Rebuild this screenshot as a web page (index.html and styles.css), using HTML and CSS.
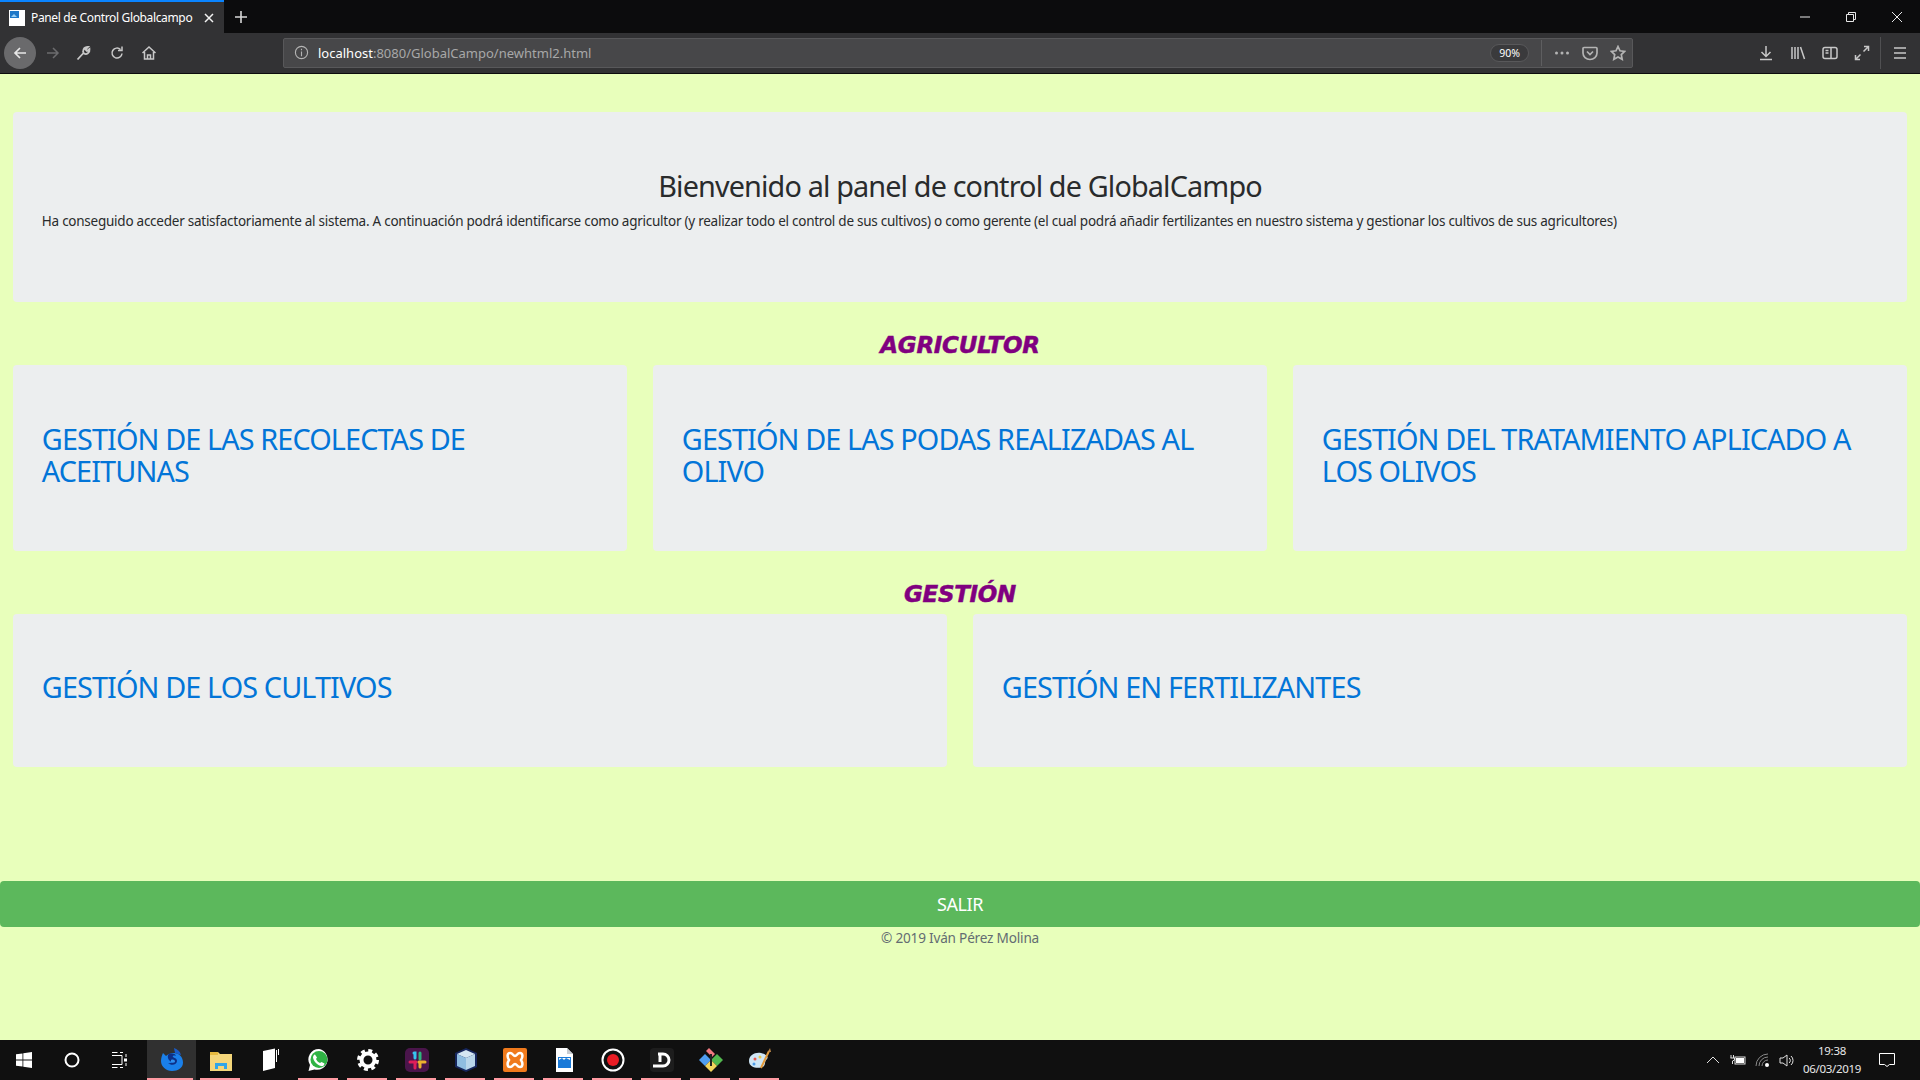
FILE: index.html
```html
<!DOCTYPE html>
<html lang="es">
<head>
  <meta charset="UTF-8">
  <title>Panel de Control Globalcampo</title>
  <link rel="stylesheet" href="styles.css">
</head>
<body>
  <div class="tabbar">
    <div class="tab">
      <svg class="favicon" viewBox="0 0 16 16"><rect width="16" height="16" fill="#fff"/><rect x="1" y="1" width="9" height="7" fill="#1f78c8"/><path d="M2 7l3-3 3 3z" fill="#9ad0f5"/></svg>
      <span class="tab-title">Panel de Control Globalcampo</span>
      <svg class="tab-close" viewBox="0 0 12 12"><path d="M2 2l8 8M10 2l-8 8"/></svg>
    </div>
    <svg class="new-tab" viewBox="0 0 14 14"><path d="M7 1v12M1 7h12"/></svg>
    <div class="window-btns">
      <svg viewBox="0 0 12 12"><path d="M1 6h10"/></svg>
      <svg viewBox="0 0 12 12"><path d="M1.500 3.500h7v7h-7zM3.500 3.500v-2h7v7h-2"/></svg>
      <svg viewBox="0 0 12 12"><path d="M1 1l10 10M11 1L1 11"/></svg>
    </div>
  </div>

  <div class="toolbar">
    <div class="back-btn">
      <svg viewBox="0 0 16 16"><path d="M14 8H3M8 3L3 8l5 5"/></svg>
    </div>
    <svg class="tool dim" viewBox="0 0 16 16"><path d="M2 8h11M8 3l5 5-5 5"/></svg>
    <svg class="tool wrench" viewBox="0 0 16 16"><path d="M2.500 14.500L8.500 8M9 8.500C7 6 8.500 2 13 2l-2.500 2.500 1.500 1.500L14.500 4c.5 4-3 6-5.500 4.500z" stroke-width="1.800"/></svg>
    <svg class="tool" viewBox="0 0 16 16"><path d="M13 8.500A5 5 0 1 1 11.500 4.500M13 1.500v4h-4"/></svg>
    <svg class="tool" viewBox="0 0 16 16"><path d="M1.500 8L8 2l6.500 6M3.500 7v7h9V7M6.500 14v-4h3v4"/></svg>

    <div class="urlbar">
      <svg class="info" viewBox="0 0 16 16"><circle cx="8" cy="8" r="6.500"/><path d="M8 7v5M8 4v1.500"/></svg>
      <span class="url"><b>localhost</b>:8080/GlobalCampo/newhtml2.html</span>
      <span class="zoom-pill">90%</span>
      <span class="url-sep"></span>
      <svg class="url-icon" viewBox="0 0 16 16"><circle cx="2.500" cy="8" r="1.500" class="solid"/><circle cx="8" cy="8" r="1.500" class="solid"/><circle cx="13.500" cy="8" r="1.500" class="solid"/></svg>
      <svg class="url-icon" viewBox="0 0 16 16"><path d="M2 2.500h12a1 1 0 0 1 1 1V8a7 6.500 0 0 1-14 0V3.500a1 1 0 0 1 1-1zM5 6.500l3 3 3-3" stroke-width="1.700"/></svg>
      <svg class="url-icon" viewBox="0 0 16 16"><path d="M8 1.500l2 4.300 4.700.6-3.400 3.200.9 4.700L8 12l-4.200 2.300.9-4.700L1.300 6.400 6 5.800z" stroke-width="1.700"/></svg>
    </div>

    <div class="right-tools">
      <svg class="tool" viewBox="0 0 16 16"><path d="M8 1v10M3.500 7L8 11.500 12.500 7M2 14.500h12"/></svg>
      <svg class="tool" viewBox="0 0 16 16"><path d="M2 2v12M5 2v12M8 2v12M10.500 2l4 12"/></svg>
      <svg class="tool" viewBox="0 0 16 16"><rect x="1" y="2.500" width="14" height="11" rx="2"/><path d="M9 2.500v11M3.500 5.500h3M3.500 8h3"/></svg>
      <svg class="tool" viewBox="0 0 16 16"><path d="M9.500 6.500L14.500 1.500M10 1.500h4.500V6M6.500 9.500l-5 5M1.500 10v4.500H6"/></svg>
      <span class="tool-sep"></span>
      <svg class="tool" viewBox="0 0 16 16"><path d="M2 3h12M2 8h12M2 13h12" stroke-width="1.700"/></svg>
    </div>
  </div>

  <main class="page">
    <section class="jumbotron">
      <h1 class="page-title">Bienvenido al panel de control de GlobalCampo</h1>
      <p>Ha conseguido acceder satisfactoriamente al sistema. A continuación podrá identificarse como agricultor (y realizar todo el control de sus cultivos) o como gerente (el cual podrá añadir fertilizantes en nuestro sistema y gestionar los cultivos de sus agricultores)</p>
    </section>

    <h3 class="section-title">AGRICULTOR</h3>
    <div class="cards three">
      <div class="jumbotron"><h2><a href="#">GESTIÓN DE LAS RECOLECTAS DE ACEITUNAS</a></h2></div>
      <div class="jumbotron"><h2><a href="#">GESTIÓN DE LAS PODAS REALIZADAS AL OLIVO</a></h2></div>
      <div class="jumbotron"><h2><a href="#">GESTIÓN DEL TRATAMIENTO APLICADO A LOS OLIVOS</a></h2></div>
    </div>

    <h3 class="section-title">GESTIÓN</h3>
    <div class="cards two">
      <div class="jumbotron"><h2><a href="#">GESTIÓN DE LOS CULTIVOS</a></h2></div>
      <div class="jumbotron"><h2><a href="#">GESTIÓN EN FERTILIZANTES</a></h2></div>
    </div>

    <a class="btn-salir" href="#">SALIR</a>
    <p class="copy">© 2019 Iván Pérez Molina</p>
  </main>

  <div class="taskbar">
    <div class="sys-btn">
      <svg viewBox="0 0 16 16"><path class="white" d="M0 2.300l6.500-.9v6.200H0zM7.300 1.300L16 0v7.600H7.300zM0 8.400h6.500v6.200L0 13.700zM7.300 8.400H16V16l-8.700-1.200z"/></svg>
    </div>
    <div class="sys-btn">
      <svg viewBox="0 0 16 16"><circle cx="8" cy="8" r="6.500" fill="none" stroke="#fff" stroke-width="2"/></svg>
    </div>
    <div class="sys-btn">
      <svg viewBox="0 0 16 16"><path fill="none" stroke="#fff" d="M0 .5h5.500M0 15.500h5.500M0 3.500h10v9H0M8 .5h3M8 15.500h3M14 2v3M14 11v3"/><rect class="white" x="12" y="6.500" width="3" height="3"/></svg>
    </div>

    <div class="app first active on">
      <svg viewBox="0 0 24 24"><path d="M3 5l3 3c2-2 5-3 8-3 5 0 9 4 9 9.500S18 23 12 23 1 18.500 1 13c0-3 1-6 2-8z" fill="#1a80ea"/><path d="M14 0c3 1 6 3 7 7l-6-2z" fill="#1a5cc8"/><path d="M8 7c2-2 7-2 8 1-2-1-4 0-3 1 1 1 4 1 4 4 0 4-6 5-9 2 2 .5 4 0 5-1-3 0-6-3-5-7z" fill="#0d2f86"/><path d="M11 12c2-1 4 0 4 1.500S12 15 11 14z" fill="#2f90f0"/></svg>
    </div>
    <div class="app on">
      <svg viewBox="0 0 24 24"><path d="M1 4h8l2 2h12v17H1z" fill="#f4d67a"/><path d="M1 4h8v3H1z" fill="#e6b93f"/><path d="M6 21v-6h12v6h-3v-3H9v3z" fill="#2fa5e8"/></svg>
    </div>
    <div class="app">
      <svg viewBox="0 0 24 24"><path d="M5 3l12-2.500V20L5 23z" fill="#fff"/><path d="M18.500 2v12M20.500 1v6" stroke="#fff" fill="none"/></svg>
    </div>
    <div class="app on">
      <svg viewBox="0 0 24 24"><path d="M12 1a10.500 10.500 0 0 0-9 16L1.500 23l6-1.500A10.500 10.500 0 1 0 12 1z" fill="#fff"/><circle cx="12" cy="11.500" r="8.500" fill="#2fb344"/><path d="M8 6.500l2 3-1 1.500c1 2 2 3 4 4l1.500-1 3 1.500c0 2-2 3-3.500 2.500C10 17 6.500 13 6 9.500 6 8 7 6.500 8 6.500z" fill="#fff"/></svg>
    </div>
    <div class="app on">
      <svg viewBox="0 0 24 24"><circle cx="12" cy="12" r="6.500" fill="none" stroke="#fff" stroke-width="4"/><circle cx="12" cy="12" r="9.500" fill="none" stroke="#fff" stroke-width="3" stroke-dasharray="4 3.460"/></svg>
    </div>
    <div class="app on">
      <svg viewBox="0 0 24 24"><rect width="24" height="24" rx="5" fill="#4a154b"/><path d="M9 5h1v5" stroke="#36c5f0" stroke-width="3" stroke-linecap="round" fill="none"/><path d="M5 14h6" stroke="#e01e5a" stroke-width="3" stroke-linecap="round"/><path d="M15 5v6" stroke="#2eb67d" stroke-width="3" stroke-linecap="round"/><path d="M14 14h6" stroke="#ecb22e" stroke-width="3" stroke-linecap="round"/><path d="M10 14v6" stroke="#e01e5a" stroke-width="3" stroke-linecap="round"/><path d="M15 15v4" stroke="#ecb22e" stroke-width="3" stroke-linecap="round"/></svg>
    </div>
    <div class="app on">
      <svg viewBox="0 0 24 24"><path d="M12 0l11 5v14l-11 5-11-5V5z" fill="#16265c"/><path d="M12 2l9 4-9 4-9-4z" fill="#d5e6f2"/><path d="M3 6l9 4v12l-9-4z" fill="#8fbde0"/><path d="M21 6l-9 4v12l9-4z" fill="#b9d6ea"/></svg>
    </div>
    <div class="app on">
      <svg viewBox="0 0 24 24"><rect width="24" height="24" rx="2" fill="#f07a1c"/><path d="M7 5c3 0 3 3 5 3s2-3 5-3 3 4 1 7c2 3 2 7-1 7s-3-3-5-3-2 3-5 3-3-4-1-7c-2-3-2-7 1-7z" fill="none" stroke="#fff" stroke-width="2.500"/></svg>
    </div>
    <div class="app on">
      <svg viewBox="0 0 24 24"><path d="M4 0h11l6 6v18H4z" fill="#fff"/><path d="M15 0l6 6h-6z" fill="#c8ccd2"/><path d="M6 9h13v11H6z" fill="#1a7ad8"/><path d="M7 12l3-2 2 2 2-2 4 2v-2H7z" fill="#fff"/></svg>
    </div>
    <div class="app on">
      <svg viewBox="0 0 24 24"><circle cx="12" cy="12" r="10.500" fill="#111" stroke="#fff" stroke-width="2"/><circle cx="12" cy="12" r="6" fill="#ea1c24"/></svg>
    </div>
    <div class="app on">
      <svg viewBox="0 0 24 24"><rect width="24" height="24" rx="4" fill="#1d1d1d"/><path d="M8 6h5a6 6 0 0 1 0 12H3" fill="none" stroke="#fff" stroke-width="3"/><path d="M10 6v8" stroke="#fff" stroke-width="3"/></svg>
    </div>
    <div class="app on">
      <svg viewBox="0 0 24 24"><path d="M6 6l6 6-6 6-6-6z" fill="#4f9df0"/><path d="M18 6l6 6-6 6-6-6z" fill="#52b84f"/><path d="M12 12l6 6-6 6-6-6z" fill="#f2d45c"/><path d="M10 0l6 6-3 3-6-6z" fill="#f07a80"/><path d="M12 6v12" stroke="#222" stroke-width="2"/></svg>
    </div>
    <div class="app on">
      <svg viewBox="0 0 24 24"><path d="M1 13c0-6 6-9 12-8 5 1 8 4 6 6-3 3-1 4-3 7-3 3-15 3-15-5z" fill="#cfe6f5"/><circle cx="7" cy="11" r="1.500" fill="#e8584f"/><circle cx="12" cy="9" r="1.500" fill="#e8c84f"/><circle cx="6" cy="16" r="1.500" fill="#4f9de8"/><path d="M13 20L21 3" stroke="#e39a3a" stroke-width="2"/><path d="M20 4l2-4 1 4z" fill="#c08a4a"/></svg>
    </div>

    <div class="tray">
      <svg viewBox="0 0 16 16"><path d="M2 11l6-6 6 6"/></svg>
      <svg viewBox="0 0 16 16"><path d="M1 3v3M3.500 3v3M0.500 6h4v2l-2 1v3"/><rect x="5" y="5" width="10" height="7"/><rect class="white" x="6" y="6" width="8" height="5"/></svg>
      <svg class="wifi" viewBox="0 0 16 16"><path d="M1 14A12 12 0 0 1 13 2M4 14a9 9 0 0 1 9-9M7 14a6 6 0 0 1 6-6"/><circle class="white" cx="12" cy="13" r="2"/></svg>
      <svg viewBox="0 0 16 16"><path d="M1 6h3l4-3v11l-4-3H1zM10 6a3 3 0 0 1 0 5M12 4a6 6 0 0 1 0 9"/></svg>
    </div>
    <div class="clock">19:38<br>06/03/2019</div>
    <div class="notif">
      <svg viewBox="0 0 16 16"><path d="M.5 1.500h15v11h-5l-2.500 2-2.500-2h-5z"/></svg>
    </div>
  </div>
</body>
</html>
```

FILE: styles.css
```css
* {
  box-sizing: border-box;
}

html {
  font-size: 14.4px;
}

body {
  margin: 0;
  height: 100vh;
  overflow: hidden;
  display: flex;
  flex-direction: column;
  font-family: "Noto Sans", "Open Sans", sans-serif;
  background: #e8ffbb;
  color: #292b2c;
}

/* browser */
.tabbar {
  height: 33px;
  display: flex;
  align-items: center;
  background: #0c0c0d;
}

.tab {
  width: 224px;
  height: 33px;
  display: flex;
  align-items: center;
  padding: 0 9px;
  gap: 6px;
  background: #323234;
  border-top: 2px solid #0a84ff;
  color: #fff;
}

.favicon {
  width: 16px;
  height: 16px;
}

.tab-title {
  flex: 1;
  font-size: 12px;
  letter-spacing: -0.35px;
  white-space: nowrap;
}

.tab-close {
  width: 12px;
  height: 12px;
  fill: none;
  stroke: #f2f2f2;
  stroke-width: 1.5;
}

.new-tab {
  width: 14px;
  height: 14px;
  margin-left: 10px;
  fill: none;
  stroke: #d8d8d8;
  stroke-width: 1.6;
}

.window-btns {
  margin-left: auto;
  display: flex;
  gap: 34px;
  padding-right: 17px;
}

.window-btns svg {
  width: 12px;
  height: 12px;
  fill: none;
  stroke: #e8e8e8;
}

.toolbar {
  height: 41px;
  display: flex;
  align-items: center;
  padding: 0 0 1px 4px;
  background: #323234;
  border-bottom: 1px solid #0c0c0d;
}

.back-btn {
  width: 32px;
  height: 32px;
  border-radius: 50%;
  display: flex;
  align-items: center;
  justify-content: center;
  background: #6a6a6c;
  margin-right: 3px;
}

.back-btn svg {
  width: 16px;
  height: 16px;
  fill: none;
  stroke: #e8e8e8;
  stroke-width: 1.7;
}

.tool {
  width: 16px;
  height: 16px;
  margin: 0 8px;
  flex: none;
  fill: none;
  stroke: #c8c8c8;
  stroke-width: 1.5;
}

.tool.dim {
  stroke: #6c6c6e;
  margin-left: 6px;
  margin-right: 6px;
}

.tool.wrench {
  margin-right: 10px;
}

.urlbar {
  margin-left: 118px;
  flex: none;
  width: 1350px;
  height: 30px;
  display: flex;
  align-items: center;
  padding: 0 6px 0 10px;
  background: #474749;
  border: 1px solid #58585a;
  border-radius: 2px;
}

.info {
  width: 15px;
  height: 15px;
  fill: none;
  stroke: #b4b4b4;
  stroke-width: 1.2;
}

.url {
  flex: 1;
  margin-left: 9px;
  font-size: 13px;
  color: #a8a8a8;
}

.url b {
  font-weight: 400;
  color: #fff;
}

.zoom-pill {
  width: 39px;
  height: 18px;
  line-height: 16px;
  text-align: center;
  border: 1px solid #58585a;
  border-radius: 9px;
  background: #3a3a3c;
  font-size: 10.500px;
  color: #fff;
}

.url-sep {
  width: 1px;
  height: 26px;
  margin: 0 12px;
  background: #5e5e60;
}

.url-icon {
  width: 16px;
  height: 16px;
  margin-right: 12px;
  fill: none;
  stroke: #b4b4b4;
  stroke-width: 1.5;
}

.url-icon:last-child {
  margin-right: 0;
}

.url-icon .solid {
  fill: #b4b4b4;
  stroke: none;
}

.right-tools {
  margin-left: 117px;
  display: flex;
  align-items: center;
}

.tool-sep {
  width: 1px;
  height: 32px;
  margin: 0 3px 0 2px;
  background: #505052;
}

.right-tools .tool {
  margin: 0 8px;
}

/* page */
.page {
  flex: 1;
  padding-top: 38px;
  text-align: center;
}

.jumbotron {
  margin: 0 13px 28.800px;
  padding: 57.600px 28.800px;
  background: #eceeef;
  border-radius: 4px;
  text-align: left;
}

h1,
h2 {
  font-size: 28.800px;
  font-weight: 400;
}

h2 {
  margin: 0 0 5.760px;
  line-height: 32.400px;
  letter-spacing: -0.880px;
}

.page-title {
  margin: 0 0 9.600px;
  line-height: 1.100;
  text-align: center;
  letter-spacing: -0.860px;
}

.jumbotron p {
  margin: 0 0 12px;
  font-size: 13.500px;
  line-height: 1.600;
  letter-spacing: -0.250px;
  white-space: nowrap;
}

.section-title {
  margin: 0;
  height: 34.400px;
  line-height: 28px;
  font-family: "DejaVu Sans", sans-serif;
  font-size: 23px;
  font-style: oblique;
  font-weight: 700;
  letter-spacing: -0.300px;
  -webkit-text-stroke: 0.5px #800080;
  color: #800080;
}

.cards {
  display: grid;
  gap: 26px;
  padding: 0 13px;
}

.cards.three {
  grid-template-columns: repeat(3, 1fr);
}

.cards.two {
  grid-template-columns: repeat(2, 1fr);
}

.cards .jumbotron {
  margin: 0 0 28.800px;
}

.cards.two .jumbotron {
  padding-top: 57px;
}

.cards a {
  color: #0275d8;
  text-decoration: none;
}

.btn-salir {
  display: block;
  margin-top: 85px;
  height: 46px;
  line-height: 47px;
  background: #5cb85c;
  border-radius: 4px;
  font-size: 18px;
  letter-spacing: -0.4px;
  color: #fff;
  text-decoration: none;
}

.copy {
  margin: 0;
  font-size: 13.600px;
  line-height: 21.600px;
  letter-spacing: -0.200px;
  color: #636c72;
}

/* windows taskbar */
.taskbar {
  height: 40px;
  display: flex;
  align-items: center;
  background: #101010;
  color: #fff;
}

.white {
  fill: #fff;
  stroke: none;
}

.sys-btn {
  width: 48px;
  height: 40px;
  display: flex;
  align-items: center;
  justify-content: center;
}

.sys-btn svg {
  width: 16px;
  height: 16px;
}

.app {
  width: 49px;
  height: 40px;
  display: flex;
  align-items: center;
  justify-content: center;
  position: relative;
}

.app.first {
  margin-left: 3px;
}

.app svg {
  width: 24px;
  height: 24px;
}

.app.active {
  background: #303030;
}

.app.on::after {
  content: "";
  position: absolute;
  left: 4px;
  right: 5px;
  bottom: 0;
  height: 2px;
  background: #ff9aa2;
}

.app.active::after {
  left: 0;
  right: 3px;
}

.tray {
  margin-left: auto;
  display: flex;
  align-items: center;
  gap: 8px;
}

.tray svg {
  width: 16px;
  height: 16px;
  fill: none;
  stroke: #e0e0e0;
}

.tray svg:nth-child(2) {
  width: 18px;
}

.tray .wifi {
  stroke: #8a8a8a;
}

.clock {
  width: 60px;
  margin-left: 7px;
  text-align: center;
  font-size: 11.500px;
  line-height: 18px;
  letter-spacing: -0.300px;
  white-space: nowrap;
  color: #e8e8e8;
}

.notif {
  width: 58px;
  padding-right: 8px;
  display: flex;
  justify-content: center;
}

.notif svg {
  width: 16px;
  height: 16px;
  fill: none;
  stroke: #fff;
}
```
